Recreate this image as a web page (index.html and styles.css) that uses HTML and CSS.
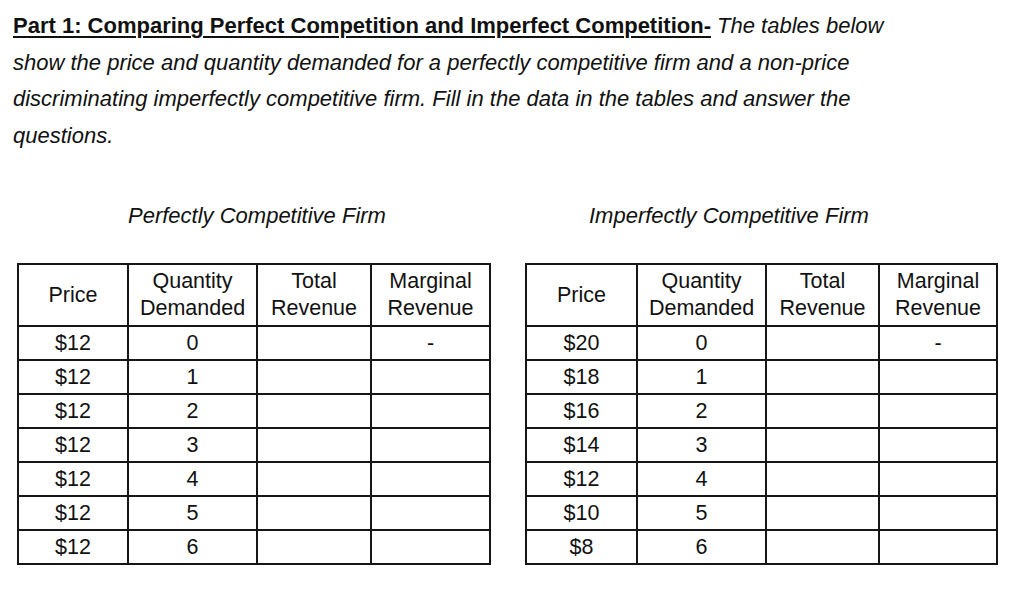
FILE: index.html
```html
<!DOCTYPE html>
<html>
<head>
<meta charset="utf-8">
<link rel="stylesheet" href="styles.css">
</head>
<body>
<div class="page">
  <p class="intro"><span class="heading">Part 1: Comparing Perfect Competition and Imperfect Competition-</span> <em>The tables below<br>show the price and quantity demanded for a perfectly competitive firm and a non-price<br>discriminating imperfectly competitive firm. Fill in the data in the tables and answer the<br>questions.</em></p>

  <div class="tables">
    <div class="block block-left">
      <div class="caption cap-left">Perfectly Competitive Firm</div>
      <table class="grid">
        <colgroup><col class="c1"><col class="c2"><col class="c3"><col class="c4"></colgroup>
        <tr class="head"><td>Price</td><td>Quantity<br>Demanded</td><td>Total<br>Revenue</td><td>Marginal<br>Revenue</td></tr>
        <tr><td>$12</td><td>0</td><td></td><td>-</td></tr>
        <tr><td>$12</td><td>1</td><td></td><td></td></tr>
        <tr><td>$12</td><td>2</td><td></td><td></td></tr>
        <tr><td>$12</td><td>3</td><td></td><td></td></tr>
        <tr><td>$12</td><td>4</td><td></td><td></td></tr>
        <tr><td>$12</td><td>5</td><td></td><td></td></tr>
        <tr><td>$12</td><td>6</td><td></td><td></td></tr>
      </table>
    </div>
    <div class="block block-right">
      <div class="caption cap-right">Imperfectly Competitive Firm</div>
      <table class="grid">
        <colgroup><col class="d1"><col class="d2"><col class="d3"><col class="d4"></colgroup>
        <tr class="head"><td>Price</td><td>Quantity<br>Demanded</td><td>Total<br>Revenue</td><td>Marginal<br>Revenue</td></tr>
        <tr><td>$20</td><td>0</td><td></td><td>-</td></tr>
        <tr><td>$18</td><td>1</td><td></td><td></td></tr>
        <tr><td>$16</td><td>2</td><td></td><td></td></tr>
        <tr><td>$14</td><td>3</td><td></td><td></td></tr>
        <tr><td>$12</td><td>4</td><td></td><td></td></tr>
        <tr><td>$10</td><td>5</td><td></td><td></td></tr>
        <tr><td>$8</td><td>6</td><td></td><td></td></tr>
      </table>
    </div>
  </div>
</div>
</body>
</html>
```

FILE: styles.css
```css
html, body {
  margin: 0;
  padding: 0;
  background: #ffffff;
}
body {
  font-family: "Liberation Sans", Arial, sans-serif;
  color: #111111;
}
.page {
  width: 1032px;
  height: 600px;
  padding: 8px 13px 0 13px;
  box-sizing: border-box;
}
.intro {
  margin: 0;
  white-space: nowrap;
  font-size: 22px;
  line-height: 36.5px;
}
.heading {
  font-weight: bold;
  text-decoration: underline;
  text-decoration-thickness: 2px;
  text-underline-offset: 3px;
}
.intro em {
  font-style: italic;
}
.tables {
  display: flex;
  gap: 34px;
  margin-top: 50px;
  padding-left: 4px;
}
.block {
  display: flex;
  flex-direction: column;
}
.caption {
  font-size: 22px;
  font-style: italic;
  line-height: 24px;
  height: 24px;
  margin-bottom: 35px;
}
.cap-left { padding-left: 111px; }
.cap-right { padding-left: 64px; }
.grid {
  border-collapse: collapse;
  table-layout: fixed;
  font-size: 21.5px;
}
.grid td {
  border: 2px solid #161616;
  text-align: center;
  vertical-align: middle;
  padding: 0;
  height: 32px;
  line-height: 24px;
}
.grid tr.head td {
  height: 60px;
  line-height: 27px;
}
.c1 { width: 110px; }
.c2 { width: 129px; }
.c3 { width: 114px; }
.c4 { width: 119px; }
.d1 { width: 111px; }
.d2 { width: 129px; }
.d3 { width: 113px; }
.d4 { width: 118px; }
```
